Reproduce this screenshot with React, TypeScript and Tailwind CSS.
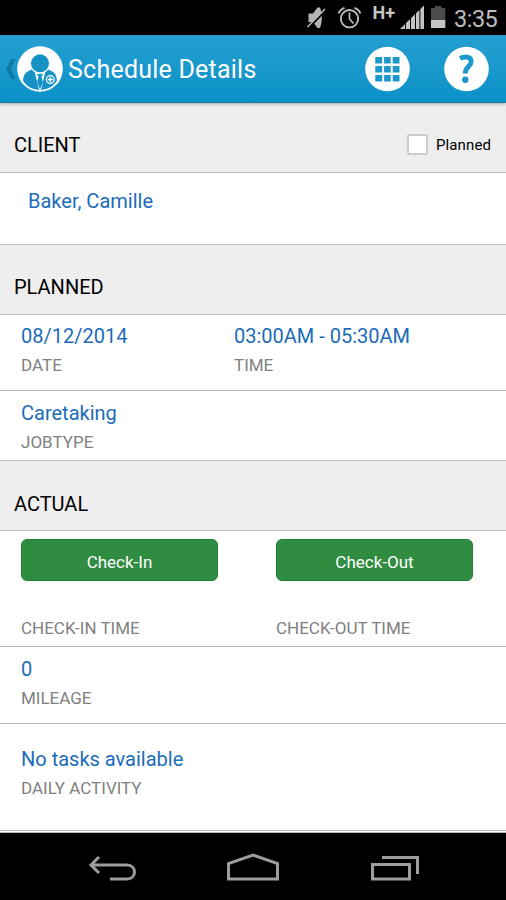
import type { ReactNode } from "react";

interface FieldProps {
  value?: string;
  label: string;
  className?: string;
}

function Field({ value, label, className = "" }: FieldProps) {
  return (
    <div className={className}>
      <p className="h-[29px] text-[20px] leading-[29px] whitespace-nowrap text-[#1b6cb9]">
        {value}
      </p>
      <p className="h-[29px] text-[17px] leading-[29px] whitespace-nowrap text-[#808080]">
        {label}
      </p>
    </div>
  );
}

function SectionHeader({
  title,
  className,
  children,
}: {
  title: string;
  className: string;
  children?: ReactNode;
}) {
  return (
    <div
      className={`flex shrink-0 items-center justify-between border-b border-[#bcbcbf] bg-[#eeeeee] pr-[15px] pl-[14px] ${className}`}
    >
      <h2 className="text-[20px] leading-6 text-black">{title}</h2>
      {children}
    </div>
  );
}

function CheckColumn({ action, label }: { action: string; label: string }) {
  return (
    <div>
      <button className="h-[42px] w-full rounded-[6px] border border-[#1f8431] bg-[#2f8c41] pt-[3px] text-[17px] leading-[34px] text-white">
        {action}
      </button>
      <p className="mt-[33px] text-[17px] leading-[29px] text-[#808080]">{label}</p>
    </div>
  );
}

function StatusBar() {
  return (
    <div className="flex h-[35px] shrink-0 bg-black">
      <svg width="506" height="35" viewBox="0 0 506 35" fill="none">
        {/* Muted speaker */}
        <path d="M308.500 13.500h4.500l4.500-6h2.500c2.500 6 2.500 14 0 20.500h-2.500l-4.500-6h-4.500z" fill="#b4b4b4" />
        <path d="M308.500 28 326 10" stroke="#000" strokeWidth="2" />
        <path d="M307.500 27 325 9" stroke="#b4b4b4" strokeWidth="1.700" />
        {/* Alarm */}
        <circle cx="349.500" cy="18.700" r="8.700" stroke="#bdbdbd" strokeWidth="1.900" />
        <path d="M349.500 12.500v6.500l4 4.500" stroke="#bdbdbd" strokeWidth="1.700" />
        <path
          d="M338.500 13.500q1.500-4 6-5.700M360.500 13.500q-1.500-4-6-5.700"
          stroke="#bdbdbd"
          strokeWidth="1.900"
        />
        {/* Network */}
        <text
          x="372.500"
          y="18.800"
          fill="#c4c4c4"
          className="font-[Roboto] text-[18px] font-bold"
        >
          H+
        </text>
        <path d="M400 29 424 5.500V29z" fill="#c4c4c4" />
        <path d="M405.500 5v24M410.500 5v24M415.500 5v24M419.900 5v24" stroke="#000" />
        {/* Battery */}
        <path d="M435 6h6.500v2h3.800v13H431V8h4z" fill="#4b4b4b" />
        <path d="M431 20h14.300v8H431z" fill="#c4c4c4" />
        <text
          x="454"
          y="26.500"
          fill="#bebebe"
          className="font-[Roboto] text-[23.500px] tracking-[-0.500px]"
        >
          3:35
        </text>
      </svg>
    </div>
  );
}

function PersonIcon() {
  return (
    <svg width="46" height="46" viewBox="0 0 46 46" fill="none" className="shrink-0">
      <circle cx="23" cy="23" r="22.800" fill="#fff" />
      <path
        d="M6 34.500C6.500 28 9 25.500 15 23.500l3 2h10l3-2c6 2 8.500 4.500 9 11C36.500 40.500 30 44 23 44S9.500 40.500 6 34.500z"
        fill="#1593c6"
      />
      <circle cx="23" cy="17.500" r="10.200" fill="#fff" />
      <circle cx="23" cy="17.300" r="9" fill="#1593c6" />
      <path d="M17.500 25 22 44h2l4.500-19-5.500 3z" fill="#fff" />
      <path d="M19.800 28h6.400l-1.700 2.500 1.400 5.500L23 43.500 20.100 36l1.400-5.500z" fill="#1593c6" />
      <circle cx="33.300" cy="33.500" r="3.900" fill="#1593c6" stroke="#fff" strokeWidth="1.200" />
      <path d="M33.300 31v5M30.800 33.500h5" stroke="#fff" strokeWidth="1.400" />
    </svg>
  );
}

function AppBar() {
  return (
    <header className="relative z-10 flex h-[68px] shrink-0 items-center border-b border-[#2878a4] bg-linear-to-b from-[#249fd0] to-[#0991c8] pr-[17px] pl-[6px] shadow-[0_1px_3px_rgba(0,0,0,0.3)]">
      <svg width="11" height="20" viewBox="0 0 11 20" className="shrink-0">
        <path d="M5.500 0h4L5 10l4.500 10h-4L0 10z" fill="#0f77a3" />
      </svg>
      <PersonIcon />
      <h1 className="mt-[3px] ml-[5px] flex-1 text-[25px] leading-8 tracking-[0.230px] whitespace-nowrap text-white">
        Schedule Details
      </h1>
      <svg width="45" height="46" viewBox="0 0 45 46" className="mr-[34px] shrink-0">
        <circle cx="22.500" cy="23" r="22.300" fill="#fff" />
        <path
          d="M10.300 11h6.900v6.500h-6.900zM19.100 11h6.600v6.500h-6.600zM27.700 11h6.800v6.500h-6.800zM10.300 20h6.900v6.500h-6.900zM19.100 20h6.600v6.500h-6.600zM27.700 20h6.800v6.500h-6.800zM10.300 29h6.900v6.500h-6.900zM19.100 29h6.600v6.500h-6.600zM27.700 29h6.800v6.500h-6.800z"
          fill="#1a98cb"
        />
      </svg>
      <svg width="45" height="46" viewBox="0 0 45 46" className="shrink-0">
        <circle cx="22.500" cy="23" r="22.300" fill="#fff" />
        <path
          d="M16 12.300c4-1.800 11.200-2.500 11.200 3.200 0 5.300-6 5-6 12"
          stroke="#1a98cb"
          strokeWidth="4.800"
          fill="none"
        />
        <circle cx="21.300" cy="33.700" r="3.200" fill="#1a98cb" />
      </svg>
    </header>
  );
}

function NavBar() {
  return (
    <nav className="h-[67px] shrink-0 bg-black">
      <svg
        width="506"
        height="67"
        viewBox="0 833 506 67"
        fill="none"
        stroke="#9d9d9d"
        strokeWidth="3"
      >
        <path d="M110 879h17c10 0 10-14 0-14H91M99 857l-8 8 8 8" />
        <path d="M228.500 879v-15.500l24.500-8.500 24.500 8.500V879z" />
        <path d="M372.500 864.500h37V879h-37zM382 857.500h35.500V874" />
      </svg>
    </nav>
  );
}

export default function App() {
  return (
    <div className="flex h-[900px] w-[506px] flex-col overflow-hidden bg-white font-[Roboto,sans-serif]">
      <StatusBar />
      <AppBar />

      {/* Client */}
      <SectionHeader title="CLIENT" className="h-[70px] pt-[15px]">
        <label className="flex items-center gap-[8px] text-[15px] tracking-[0.100px] text-black">
          <span className="-mt-[2px] h-[21px] w-[21px] rounded-[2px] border-2 border-[#cccccc] bg-white" />
          Planned
        </label>
      </SectionHeader>
      <div className="h-[72px] shrink-0 border-b border-[#bcbcbf] pt-[14px] pl-[28px] text-[20px] leading-[29px] text-[#1b6cb9]">
        Baker, Camille
      </div>

      {/* Planned */}
      <SectionHeader title="PLANNED" className="h-[70px] pt-[15px]" />
      <div className="flex h-[76px] shrink-0 border-b border-[#bcbcbf] pt-[7px] pl-[21px]">
        <Field value="08/12/2014" label="DATE" className="w-[213px]" />
        <Field value="03:00AM - 05:30AM" label="TIME" />
      </div>
      <div className="h-[70px] shrink-0 border-b border-[#bcbcbf] pt-[8px] pl-[21px]">
        <Field value="Caretaking" label="JOBTYPE" />
      </div>

      {/* Actual */}
      <SectionHeader title="ACTUAL" className="h-[70px] pt-[17px]" />
      <div className="grid h-[116px] shrink-0 grid-cols-[197px_197px] gap-x-[58px] border-b border-[#bcbcbf] pt-[8px] pl-[21px]">
        <CheckColumn action="Check-In" label="CHECK-IN TIME" />
        <CheckColumn action="Check-Out" label="CHECK-OUT TIME" />
      </div>
      <div className="h-[77px] shrink-0 border-b border-[#bcbcbf] pt-[8px] pl-[21px]">
        <Field value="0" label="MILEAGE" />
      </div>
      <div className="h-[107px] shrink-0 border-b border-[#bcbcbf] pt-[21px] pl-[21px]">
        <Field value="No tasks available" label="DAILY ACTIVITY" />
      </div>
      <div className="h-[2px] shrink-0 border-b border-[#bbbbbb]" />
      <NavBar />
    </div>
  );
}
